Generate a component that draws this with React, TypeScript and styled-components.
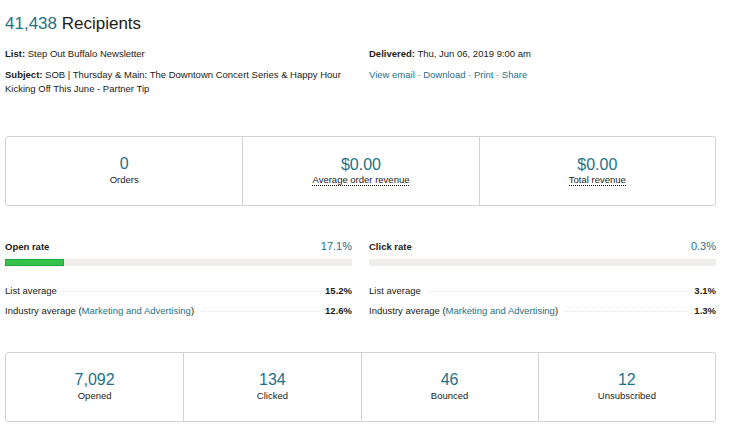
import { styled, createGlobalStyle } from 'styled-components'

const Global = createGlobalStyle`
  body {
    margin: 0;
    background: #fff;
    font-family: "Liberation Sans", Arial, sans-serif;
    color: #241c15;
  }
`

const teal = '#1f7186'

const Page = styled.div`
  width: 711px;
  padding: 10px 0 0 5px;
`

const Title = styled.h1`
  margin: 0;
  font-size: 17px;
  font-weight: 400;
  line-height: 28px;
  & span {
    color: ${teal};
  }
`

const Meta = styled.div`
  display: grid;
  grid-template-columns: 364px 1fr;
  margin-top: 9px;
  font-size: 9.5px;
  line-height: 14px;
`

const MetaCol = styled.div`
  display: flex;
  flex-direction: column;
  gap: 7px;
`

const Links = styled.div`
  color: ${teal};
`

const StatBox = styled.div<{ $cols: number; $top: number }>`
  display: grid;
  grid-template-columns: repeat(${(p) => p.$cols}, 1fr);
  margin-top: ${(p) => p.$top}px;
  border: 1px solid #d3d3d3;
  border-radius: 3px;
  height: 68px;
`

const Cell = styled.div`
  display: flex;
  flex-direction: column;
  align-items: center;
  justify-content: center;
  padding-bottom: 2px;
  & + & {
    border-left: 1px solid #d3d3d3;
  }
`

const Num = styled.div`
  color: ${teal};
  font-size: 16px;
  line-height: 19px;
`

const Label = styled.div<{ $dotted?: boolean }>`
  font-size: 9.5px;
  border-bottom: ${(p) => (p.$dotted ? '1px dotted #241c15' : 'none')};
  line-height: ${(p) => (p.$dotted ? '11px' : '13px')};
`

const Rates = styled.div`
  display: grid;
  grid-template-columns: 347px 347px;
  column-gap: 17px;
  margin-top: 33px;
`

const RateHead = styled.div`
  display: flex;
  justify-content: space-between;
  align-items: baseline;
  font-size: 9.5px;
  line-height: 14px;
  & b {
    font-weight: 700;
  }
  & span {
    color: ${teal};
    font-size: 11px;
  }
`

const Bar = styled.div`
  margin-top: 5px;
  height: 7px;
  background: #efeeea;
`

const Fill = styled.div`
  height: 100%;
  background: #35c24a;
  box-shadow: inset 0 0 0 1px #22a838;
`

const AvgRow = styled.div<{ $top: number }>`
  display: flex;
  align-items: baseline;
  gap: 6px;
  margin-top: ${(p) => p.$top}px;
  font-size: 9.5px;
  line-height: 14px;
  & a {
    color: ${teal};
    text-decoration: none;
  }
  & i {
    flex: 1;
    font-style: normal;
    border-bottom: 1px dotted #e4e4e4;
    transform: translateY(-2px);
  }
  & b {
    font-weight: 700;
  }
`

function RateBlock({ title, value, pct, list, industry }: { title: string; value: string; pct: number; list: string; industry: string }) {
  return (
    <div>
      <RateHead>
        <b>{title}</b>
        <span>{value}</span>
      </RateHead>
      <Bar>
        {pct > 1 && <Fill style={{ width: `${pct}%` }} />}
      </Bar>
      <AvgRow $top={18}>
        List average<i />
        <b>{list}</b>
      </AvgRow>
      <AvgRow $top={6}>
        <span>
          Industry average (<a>Marketing and Advertising</a>)
        </span>
        <i />
        <b>{industry}</b>
      </AvgRow>
    </div>
  )
}

export default function App() {
  return (
    <Page>
      <Global />
      <Title>
        <span>41,438</span> Recipients
      </Title>
      <Meta>
        <MetaCol>
          <div>
            <b>List:</b> Step Out Buffalo Newsletter
          </div>
          <div>
            <b>Subject:</b> SOB | Thursday &amp; Main: The Downtown Concert Series &amp; Happy Hour
            <br />
            Kicking Off This June - Partner Tip
          </div>
        </MetaCol>
        <MetaCol>
          <div>
            <b>Delivered:</b> Thu, Jun 06, 2019 9:00 am
          </div>
          <Links>View email · Download · Print · Share</Links>
        </MetaCol>
      </Meta>

      <StatBox $cols={3} $top={40}>
        <Cell>
          <Num>0</Num>
          <Label>Orders</Label>
        </Cell>
        <Cell>
          <Num>$0.00</Num>
          <Label $dotted>Average order revenue</Label>
        </Cell>
        <Cell>
          <Num>$0.00</Num>
          <Label $dotted>Total revenue</Label>
        </Cell>
      </StatBox>

      <Rates>
        <RateBlock title="Open rate" value="17.1%" pct={17.1} list="15.2%" industry="12.6%" />
        <RateBlock title="Click rate" value="0.3%" pct={0.3} list="3.1%" industry="1.3%" />
      </Rates>

      <StatBox $cols={4} $top={34}>
        <Cell>
          <Num>7,092</Num>
          <Label>Opened</Label>
        </Cell>
        <Cell>
          <Num>134</Num>
          <Label>Clicked</Label>
        </Cell>
        <Cell>
          <Num>46</Num>
          <Label>Bounced</Label>
        </Cell>
        <Cell>
          <Num>12</Num>
          <Label>Unsubscribed</Label>
        </Cell>
      </StatBox>
    </Page>
  )
}
